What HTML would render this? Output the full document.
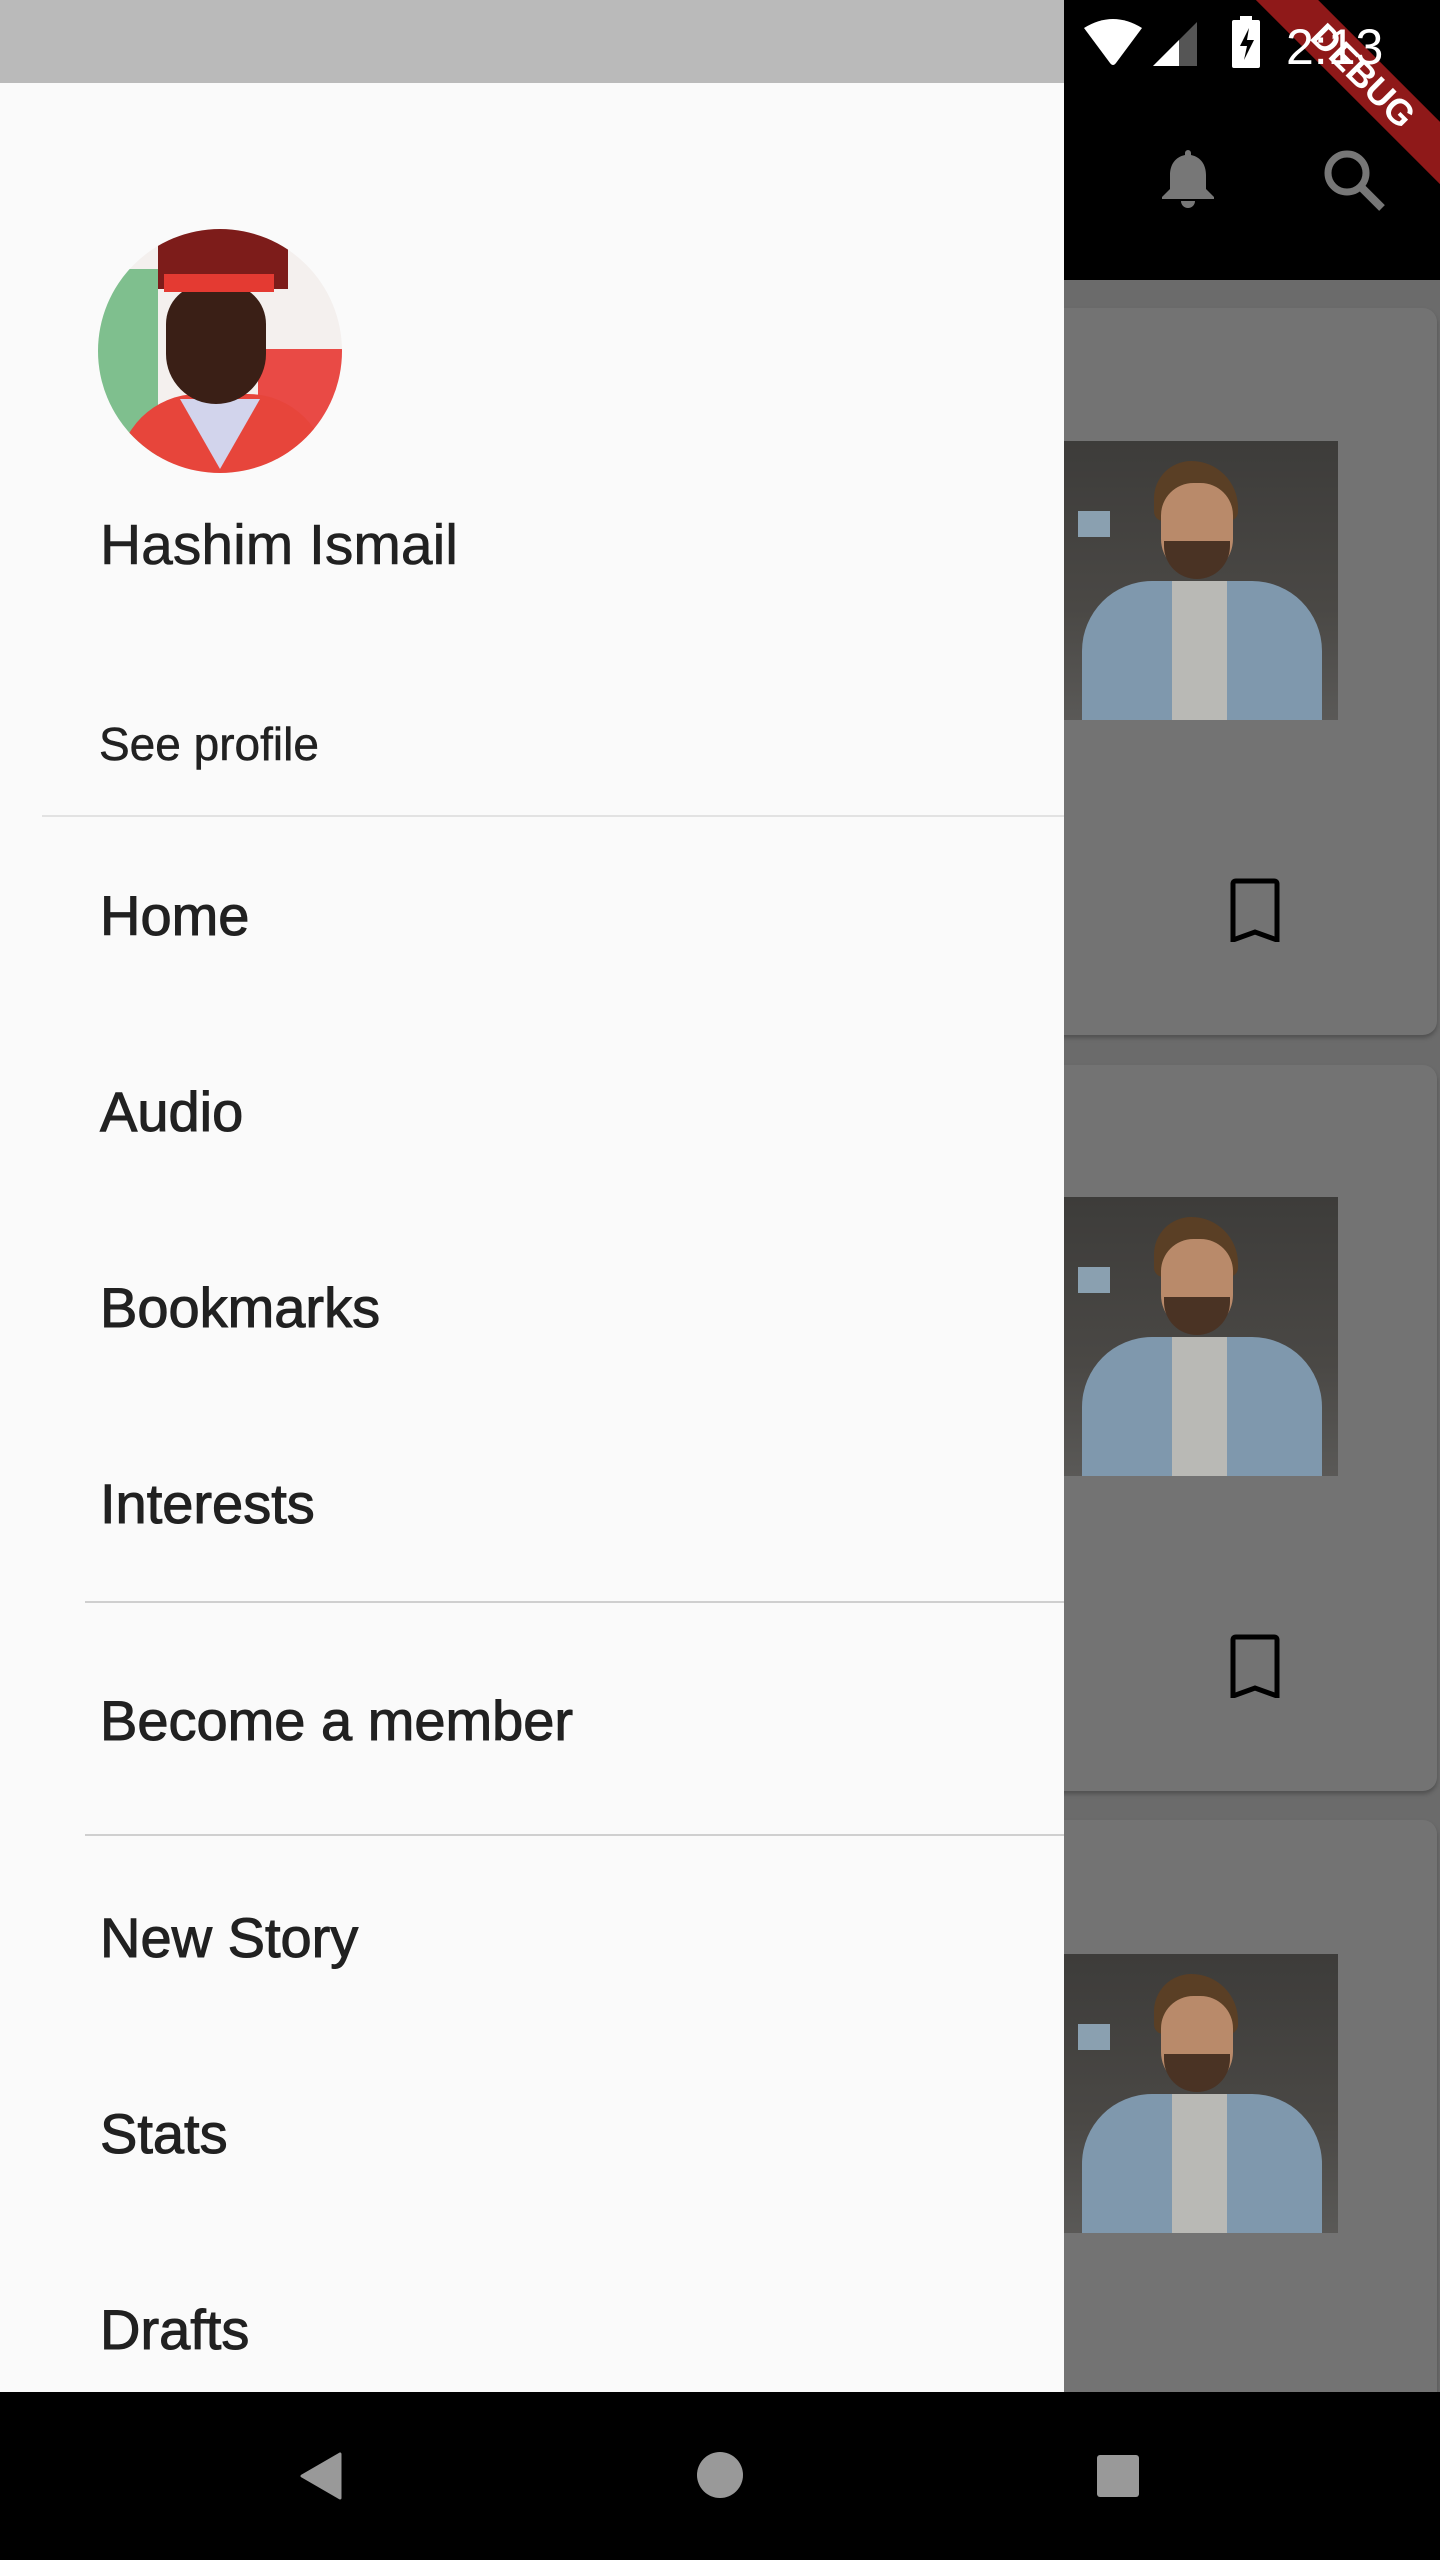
<!DOCTYPE html>
<html><head><meta charset="utf-8"><style>
*{margin:0;padding:0;box-sizing:border-box}
body{width:1440px;height:2560px;position:relative;overflow:hidden;background:#6b6b6b;font-family:"Liberation Sans",sans-serif}
.abs{position:absolute}
.card{position:absolute;left:1040px;width:397px;background:#737373;border-radius:14px;box-shadow:0 3px 4px rgba(0,0,0,.25)}
.photo{position:absolute;left:1064px;width:274px;height:279px;background:linear-gradient(#3d3c3a,#4a4845 60%,#5a5957);overflow:hidden}
.photo .hair{position:absolute;left:90px;top:20px;width:84px;height:60px;border-radius:40px 50px 10px 10px;background:#5a3f25}
.photo .face{position:absolute;left:97px;top:42px;width:72px;height:92px;border-radius:36px 36px 40px 40px;background:#b98a6a}
.photo .beard{position:absolute;left:100px;top:100px;width:66px;height:38px;border-radius:0 0 34px 34px;background:#4a3324}
.photo .body{position:absolute;left:18px;top:140px;width:240px;height:160px;border-radius:70px 70px 0 0;background:#7f98ad}
.photo .tee{position:absolute;left:108px;top:140px;width:55px;height:140px;background:#b9b9b5}
.photo .mon{position:absolute;left:14px;top:70px;width:32px;height:26px;background:#8aa0b0}
.item{position:absolute;left:100px;font-size:56px;color:#212121;-webkit-text-stroke:1px #212121;line-height:1}
</style></head><body>
<div class="abs" style="left:1064px;top:0;width:376px;height:280px;background:#000"></div>
<div class="card" style="top:308px;height:727px"></div>
<div class="card" style="top:1065px;height:726px"></div>
<div class="card" style="top:1820px;height:640px"></div>
<div class="photo" style="top:441px"><div class="mon"></div><div class="body"></div><div class="tee"></div><div class="hair"></div><div class="face"></div><div class="beard"></div></div>
<div class="photo" style="top:1197px"><div class="mon"></div><div class="body"></div><div class="tee"></div><div class="hair"></div><div class="face"></div><div class="beard"></div></div>
<div class="photo" style="top:1954px"><div class="mon"></div><div class="body"></div><div class="tee"></div><div class="hair"></div><div class="face"></div><div class="beard"></div></div>
<svg class="abs" style="left:1230px;top:878px" width="50" height="64" viewBox="0 0 50 64"><path d="M3 62V6Q3 3 6 3H44Q47 3 47 6V62L25 54Z" fill="none" stroke="#000" stroke-width="5"/></svg>
<svg class="abs" style="left:1230px;top:1634px" width="50" height="64" viewBox="0 0 50 64"><path d="M3 62V6Q3 3 6 3H44Q47 3 47 6V62L25 54Z" fill="none" stroke="#000" stroke-width="5"/></svg>
<svg class="abs" style="left:1158px;top:148px" width="60" height="64" viewBox="0 0 60 64"><path d="M30 2a3 3 0 0 1 3 3v2c10 2 15 10 15 20v14l8 8v2H4v-2l8-8V27c0-10 5-18 15-20V5a3 3 0 0 1 3-3zM23 53h14a7 7 0 0 1-14 0z" fill="#777"/></svg>
<svg class="abs" style="left:1324px;top:150px" width="62" height="62" viewBox="0 0 62 62"><circle cx="23" cy="23" r="19" fill="none" stroke="#777" stroke-width="7"/><path d="M36 36L58 58" stroke="#777" stroke-width="8"/></svg>
<svg class="abs" style="left:1082px;top:16px" width="62" height="50" viewBox="0 0 62 50"><path d="M2 12Q31 -6 60 12L34 47Q31 51 28 47Z" fill="#fff"/></svg>
<svg class="abs" style="left:1151px;top:20px" width="48" height="48" viewBox="0 0 48 48"><path d="M2 46L46 2V46Z" fill="#555"/><path d="M2 46L28 20V46Z" fill="#fff"/></svg>
<svg class="abs" style="left:1231px;top:16px" width="30" height="52" viewBox="0 0 30 52"><path d="M9 0h12v4h6a2 2 0 0 1 2 2v44a2 2 0 0 1-2 2H3a2 2 0 0 1-2-2V6a2 2 0 0 1 2-2h6z" fill="#fff"/><path d="M18 12L9 30h7l-3 14 10-20h-7z" fill="#000"/></svg>
<div class="abs" style="left:1218px;top:54px;width:290px;height:44px;background:#8f1919;transform:rotate(45deg);color:#fff;font-weight:bold;font-size:36px;text-align:center;line-height:44px">DEBUG</div>
<div class="abs" style="left:1286px;top:18px;font-size:50px;color:#fff">2:13</div>
<div class="abs" style="left:0;top:0;width:1064px;height:83px;background:#bababa"></div>
<div class="abs" style="left:0;top:83px;width:1064px;height:2309px;background:#fafafa"></div>
<div class="abs" style="left:98px;top:229px;width:244px;height:244px;border-radius:50%;overflow:hidden;background:#f4f0ee">
 <div class="abs" style="left:0;top:40px;width:60px;height:200px;background:#7fbf8e"></div>
 <div class="abs" style="left:160px;top:120px;width:90px;height:110px;background:#e94a45"></div>
 <div class="abs" style="left:20px;top:165px;width:210px;height:120px;border-radius:80px 80px 0 0;background:#e7453b"></div>
 <div class="abs" style="left:82px;top:170px;width:80px;height:70px;background:#d2d4ec;clip-path:polygon(0 0,100% 0,50% 100%)"></div>
 <div class="abs" style="left:68px;top:55px;width:100px;height:120px;border-radius:40px 40px 50px 50px;background:#3a1f16"></div>
 <div class="abs" style="left:60px;top:0;width:130px;height:60px;background:#7d1c1a"></div>
 <div class="abs" style="left:66px;top:45px;width:110px;height:18px;background:#e43a32"></div>
</div>
<div class="abs" style="left:100px;top:517px;font-size:57px;color:#212121;line-height:1;-webkit-text-stroke:0.6px #212121">Hashim Ismail</div>
<div class="abs" style="left:99px;top:721px;font-size:46px;color:#212121;line-height:1;-webkit-text-stroke:0.5px #212121">See profile</div>
<div class="abs" style="left:42px;top:815px;width:1022px;height:2px;background:#e2e2e2"></div>
<div class="item" style="top:888px">Home</div>
<div class="item" style="top:1084px">Audio</div>
<div class="item" style="top:1280px">Bookmarks</div>
<div class="item" style="top:1476px">Interests</div>
<div class="abs" style="left:85px;top:1601px;width:979px;height:2px;background:#cfcfcf"></div>
<div class="item" style="top:1693px">Become a member</div>
<div class="abs" style="left:85px;top:1834px;width:979px;height:2px;background:#cfcfcf"></div>
<div class="item" style="top:1910px">New Story</div>
<div class="item" style="top:2106px">Stats</div>
<div class="item" style="top:2302px">Drafts</div>
<div class="abs" style="left:0;top:2392px;width:1440px;height:168px;background:#000"></div>
<svg class="abs" style="left:300px;top:2452px" width="42" height="48" viewBox="0 0 42 48"><path d="M40 2V46L2 24Z" fill="#999" stroke="#999" stroke-width="3" stroke-linejoin="round"/></svg>
<div class="abs" style="left:697px;top:2452px;width:46px;height:46px;border-radius:50%;background:#999"></div>
<div class="abs" style="left:1097px;top:2455px;width:42px;height:42px;border-radius:3px;background:#999"></div>
</body></html>
